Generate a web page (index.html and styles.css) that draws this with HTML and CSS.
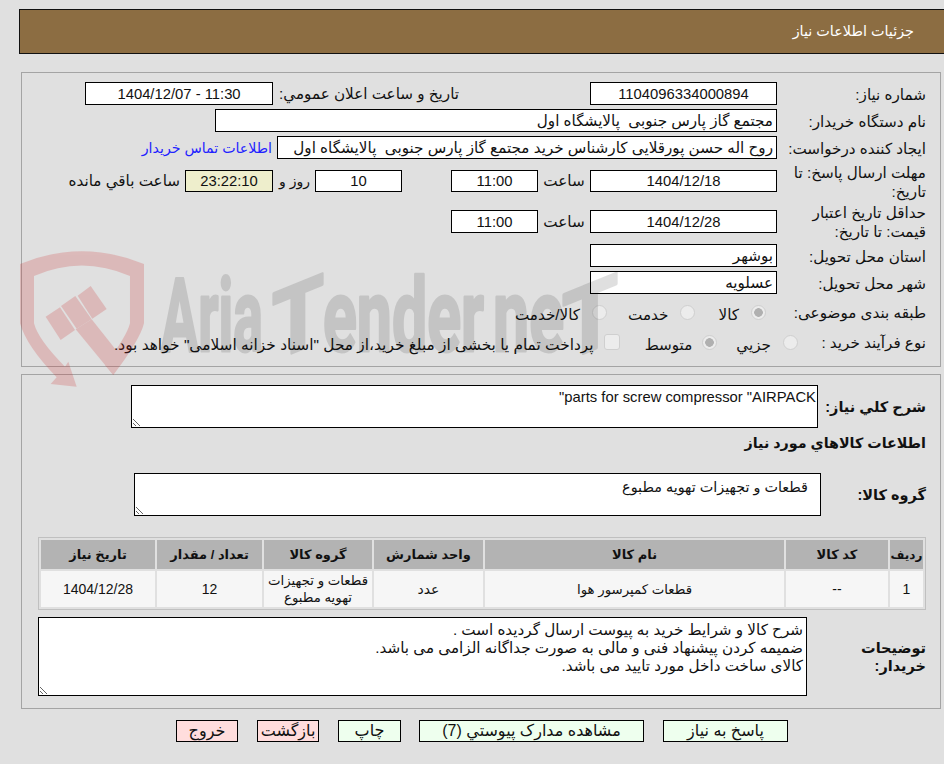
FILE: index.html
```html
<!DOCTYPE html>
<html lang="fa" dir="rtl">
<head>
<meta charset="utf-8">
<title>جزئیات اطلاعات نیاز</title>
<link rel="stylesheet" href="styles.css">
</head>
<body>
<div class="page">
  <header class="title-bar">جزئیات اطلاعات نیاز</header>

  <section class="panel panel-info">
    <div class="row row-plain">
      <span class="lbl">شماره نياز:</span>
      <span class="field f-main center num">1104096334000894</span>
      <span class="lbl-mid">تاریخ و ساعت اعلان عمومي:</span>
      <span class="field f-date center num">11:30 - 1404/12/07</span>
    </div>
    <div class="row row-plain gap4">
      <span class="lbl">نام دستگاه خریدار:</span>
      <span class="field f-buyer">مجتمع گاز پارس جنوبی&nbsp; پالایشگاه اول</span>
    </div>
    <div class="row row-plain gap4">
      <span class="lbl">ایجاد کننده درخواست:</span>
      <span class="field f-creator">روح اله حسن پورقلایی کارشناس خرید مجتمع گاز پارس جنوبی&nbsp; پالایشگاه اول</span>
      <a class="contact" href="#">اطلاعات تماس خریدار</a>
    </div>
    <div class="row row-tall gap5">
      <span class="lbl">مهلت ارسال پاسخ: تا تاریخ:</span>
      <span class="field f-main short center num">1404/12/18</span>
      <span class="hour">ساعت</span>
      <span class="field f-time short center num">11:00</span>
      <span class="field f-days short center num">10</span>
      <span class="unit unit-day">روز و</span>
      <span class="field f-count short center num">23:22:10</span>
      <span class="unit">ساعت باقي مانده</span>
    </div>
    <div class="row row-tall2 gap6">
      <span class="lbl">حداقل تاریخ اعتبار قیمت: تا تاریخ:</span>
      <span class="field f-main center num">1404/12/28</span>
      <span class="hour">ساعت</span>
      <span class="field f-time center num">11:00</span>
    </div>
    <div class="row row-plain gap5">
      <span class="lbl">استان محل تحویل:</span>
      <span class="field f-main">بوشهر</span>
    </div>
    <div class="row row-plain gap4">
      <span class="lbl">شهر محل تحویل:</span>
      <span class="field f-main">عسلویه</span>
    </div>
    <div class="row row-opts gap6">
      <span class="lbl">طبقه بندی موضوعی:</span>
      <label class="opt o-kala"><input type="radio" name="cat" disabled checked><span>کالا</span></label>
      <label class="opt o-service"><input type="radio" name="cat" disabled><span>خدمت</span></label>
      <label class="opt"><input type="radio" name="cat" disabled><span>کالا/خدمت</span></label>
    </div>
    <div class="row row-opts gap6">
      <span class="lbl lbl-narrow">نوع فرآیند خرید :</span>
      <label class="opt o-small"><input type="radio" name="proc" disabled><span>جزيي</span></label>
      <label class="opt o-mid"><input type="radio" name="proc" disabled checked><span>متوسط</span></label>
      <label class="opt o-pay"><input class="chk" type="checkbox" disabled><span>پرداخت تمام یا بخشی از مبلغ خرید،از محل "اسناد خزانه اسلامی" خواهد بود.</span></label>
    </div>
  </section>

  <section class="panel panel-goods">
    <div class="row-area">
      <span class="lbl-b w108">شرح کلي نياز:</span>
      <textarea class="area a-desc" readonly>&lrm;"parts for screw compressor "AIRPACK</textarea>
    </div>
    <h2 class="section-title">اطلاعات کالاهاي مورد نياز</h2>
    <div class="row-area">
      <span class="lbl-b w105">گروه کالا:</span>
      <textarea class="area a-group" readonly>قطعات و تجهیزات تهویه مطبوع</textarea>
    </div>
    <table class="goods">
      <colgroup>
        <col class="c1"><col class="c2"><col class="c3"><col class="c4"><col class="c5"><col class="c6"><col class="c7">
      </colgroup>
      <thead>
        <tr><th class="th-narrow">رديف</th><th>کد کالا</th><th>نام کالا</th><th>واحد شمارش</th><th>گروه کالا</th><th>تعداد / مقدار</th><th>تاریخ نیاز</th></tr>
      </thead>
      <tbody>
        <tr><td>1</td><td>--</td><td class="ar">قطعات کمپرسور هوا</td><td>عدد</td><td class="ar">قطعات و تجهیزات<br>تهویه مطبوع</td><td>12</td><td>1404/12/28</td></tr>
      </tbody>
    </table>
    <div class="row-area notes">
      <span class="lbl-b w119">توضیحات خریدار:</span>
      <textarea class="area a-notes" readonly>شرح کالا و شرایط خرید به پیوست ارسال گردیده است .
ضمیمه کردن پیشنهاد فنی و مالی به صورت جداگانه الزامی می باشد.
کالای ساخت داخل مورد تایید می باشد.</textarea>
    </div>
  </section>

  <nav class="actions">
    <button class="btn ok b-reply" type="button">پاسخ به نیاز</button>
    <button class="btn ok b-docs" type="button">مشاهده مدارک پیوستي (7)</button>
    <button class="btn ok b-print" type="button">چاپ</button>
    <button class="btn no b-back" type="button">بازگشت</button>
    <button class="btn no b-exit" type="button">خروج</button>
  </nav>
</div>
<svg class="watermark" viewBox="0 0 944 764" width="944" height="764" aria-hidden="true">
  <g transform="translate(10 240) scale(0.3333)" class="wm-shield">
    <path d="M30 72Q215 -5 402 72L402 250Q390 300 310 405L285 375Q350 290 360 250L360 108Q215 45 72 108L72 250Q85 300 165 380L175 365L200 440L122 432L140 412Q50 320 30 250Z"/>
    <path d="M197 268L245 238L330 345L310 405Z"/>
    <path d="M107 230L150 202L195 270L152 300Z"/>
    <path d="M153 198L196 168L245 238L200 266Z"/>
    <path d="M203 167L242 138L290 207L247 236Z"/>
  </g>
  <g class="wm-text" direction="ltr">
    <text x="161" y="351" textLength="102" lengthAdjust="spacingAndGlyphs">Aria</text>
    <text class="wm-t" x="272" y="351" textLength="52" lengthAdjust="spacingAndGlyphs" transform="skewY(-22) translate(0 120)">T</text>
    <text x="323" y="351" textLength="161" lengthAdjust="spacingAndGlyphs">ender</text>
    <text x="493" y="351" textLength="71" lengthAdjust="spacingAndGlyphs">ne</text>
    <text class="wm-t" x="562" y="351" textLength="56" lengthAdjust="spacingAndGlyphs" transform="skewY(-22) translate(0 238)">T</text>
  </g>
</svg>
</body>
</html>
```
FILE: styles.css
```css
* { box-sizing: border-box; }
html, body { margin: 0; padding: 0; }
body {
  position: relative;
  width: 944px;
  height: 764px;
  overflow: hidden;
  background: #e0e0e0;
  color: #111;
  font-family: "Liberation Sans", "DejaVu Sans", sans-serif;
  font-size: 15.2px;
}
.watermark { position: absolute; left: 0; top: 0; z-index: 2; pointer-events: none; }
.wm-shield { opacity: 0.2; }
.wm-shield path { fill: #cc2222; }
.wm-text { opacity: 0.12; }
.wm-text text { fill: #000; stroke: #000; stroke-width: 3; stroke-linejoin: round; font-family: Roboto, sans-serif; font-weight: 700; font-size: 102px; }
.wm-text .wm-t { font-size: 94px; }

.page { padding-top: 9px; }

.title-bar {
  height: 45px;
  margin-left: 19px;
  padding-right: 30px;
  background: #8c6d42;
  border: 1px solid #111;
  border-right: 0;
  color: #fff;
  font-size: 14.4px;
  line-height: 43px;
}

.panel {
  width: 920px;
  margin-right: 3px;
  border: 1px solid #a4a4a4;
  padding-right: 14px;
}
.panel-info { margin-top: 18px; padding-top: 9px; padding-bottom: 12px; }
.panel-goods { margin-top: 7px; padding-top: 10px; padding-bottom: 12px; }

.row { display: flex; align-items: center; }
.row-plain { height: 23px; }
.row-tall { height: 34px; }
.row-tall2 { height: 35px; }
.row-opts { height: 24px; }
.gap4 { margin-top: 4px; }
.gap5 { margin-top: 5px; }
.gap6 { margin-top: 6px; }

.lbl { width: 140px; margin-left: 9px; padding-top: 1px; line-height: 19px; flex: none; }
.lbl-narrow { width: 128px; margin-left: 0; }
.lbl-mid { flex: none; margin: 0 131px 0 6px; white-space: nowrap; }

.field {
  display: block;
  height: 23px;
  flex: none;
  padding: 0 3px;
  background: #fff;
  border: 1px solid #000;
  line-height: 22px;
  white-space: nowrap;
  overflow: hidden;
}
.num { font-size: 14.8px; }
.short { height: 22px; line-height: 21px; }
.center { text-align: center; }
.f-main { width: 187px; }
.f-date { width: 188px; }
.f-buyer { width: 562px; }
.f-creator { width: 500px; }
.f-time { width: 87px; }
.f-days { width: 87px; margin-right: 49px; }
.f-count { width: 88px; background: #eeeecc; }

.contact { margin-right: 5px; color: #2222ff; font-size: 14.2px; text-decoration: none; white-space: nowrap; }
.hour { width: 52px; text-align: center; flex: none; }
.unit { margin: 0 5px; white-space: nowrap; flex: none; }
.unit-day { font-size: 14px; width: 28px; margin-left: 9px; }

.opt { display: flex; align-items: center; white-space: nowrap; margin-left: 24px; }
.opt span { margin-top: 6px; }
.o-kala { margin-right: 11px; margin-left: 23px; }
.o-service { margin-left: 21px; }
.o-small { margin-left: 19px; }
.o-mid { margin-left: 25px; }
.o-pay { margin-left: 0; font-size: 15.4px; }
.opt input {
  appearance: none;
  -webkit-appearance: none;
  flex: none;
  width: 15px;
  height: 15px;
  margin: 0 0 0 12px;
  border: 1px solid #cfcfcf;
  border-radius: 50%;
  background: #ececec;
}
.opt input:checked { background: radial-gradient(circle, #b0b0b0 0 4px, #ececec 4.6px); }
.opt input.chk { width: 16px; height: 16px; border-radius: 3px; margin-left: 10px; }
.o-mid input { margin-left: 10px; }

.row-area { display: flex; align-items: center; }
.lbl-b { flex: none; font-weight: 700; font-size: 14.5px; line-height: 18px; }
.w108 { width: 108px; }
.w105 { width: 105px; }
.w119 { width: 119px; padding-left: 50px; }

.area {
  display: block;
  flex: none;
  margin: 0;
  background: #fff;
  border: 1px solid #000;
  border-radius: 0;
  color: #111;
  font-family: inherit;
  outline: none;
}
.a-desc { width: 687px; height: 43px; padding: 3px 1px 1px; font-size: 14.8px; }
.a-group { width: 687px; height: 43px; padding: 5px 12px 1px 2px; font-size: 14.4px; }
.a-notes { width: 769px; height: 79px; padding: 3px; font-size: 15.2px; line-height: 18px; }

.section-title { margin: 5px 0 0; height: 20px; font-size: 14.3px; font-weight: 700; line-height: 20px; }
.section-title + .row-area { margin-top: 20px; }

.goods {
  width: 888px;
  margin-top: 21px;
  table-layout: fixed;
  border-collapse: separate;
  border-spacing: 2px;
  border: 1px solid #c0c0c0;
}
.c1 { width: 33px; } .c2 { width: 102px; } .c3 { width: 299px; } .c4 { width: 109px; }
.c5 { width: 108px; } .c6 { width: 105px; } .c7 { width: 114px; }
.goods th { height: 29px; padding: 0; background: #b3b3b3; font-size: 13px; font-weight: 700; text-align: center; }
.goods .th-narrow { font-size: 12px; }
.goods td { height: 36px; padding: 0; background: #f6f6f6; font-size: 14px; line-height: 17px; text-align: center; white-space: nowrap; }
.goods .ar { font-size: 13.3px; }

.notes { margin-top: 7px; }

.actions { display: flex; gap: 19px; margin-top: 11px; padding-right: 156px; }
.btn {
  height: 22px;
  padding: 0;
  border: 1px solid #000;
  border-radius: 0;
  color: #111;
  font-family: inherit;
  font-size: 16px;
  line-height: 20px;
}
.ok { background: #eeffee; }
.no { background: #ffdddd; }
.b-reply { width: 125px; }
.b-docs { width: 225px; margin-left: -1px; }
.b-print { width: 63px; }
.b-back { width: 62px; }
.b-exit { width: 62px; }
```
